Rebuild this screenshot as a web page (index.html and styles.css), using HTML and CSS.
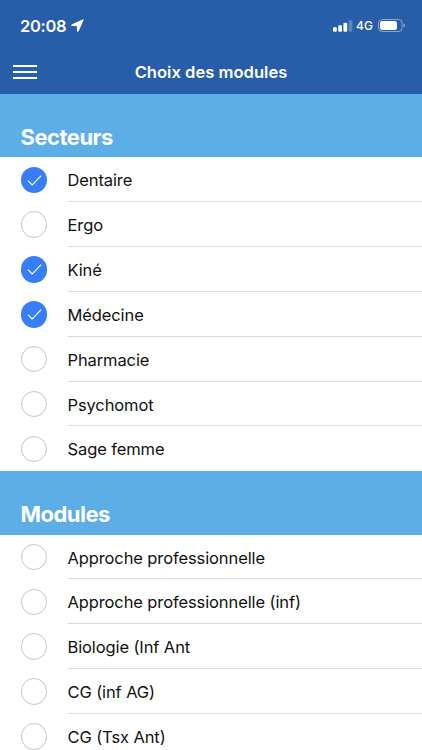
FILE: index.html
```html
<!DOCTYPE html>
<html lang="fr">
<head>
  <meta charset="UTF-8" />
  <meta name="viewport" content="width=device-width, initial-scale=1.0"/>
  <title>Choix des modules</title>
  <link rel="stylesheet" href="styles.css">
</head>
<body>
  <header>
    <div class="status-bar">
      <div class="status-left">
        <span class="time">20:08</span>
        <svg class="location" viewBox="0 0 13 13"><path d="M12.3 .7 L.7 5.9 V6.5 L6.3 6.7 L6.5 12.3 H7.1 Z" fill="#fff" stroke="#fff" stroke-width="1" stroke-linejoin="round"/></svg>
      </div>
      <div class="status-right">
        <svg class="signal" viewBox="0 0 20 12">
          <rect x="0" y="7.3" width="3.8" height="4.4" rx="1" fill="#fff"/>
          <rect x="5.2" y="5.2" width="3.8" height="6.5" rx="1" fill="#fff"/>
          <rect x="10.4" y="2.8" width="3.8" height="8.9" rx="1" fill="#fff"/>
          <rect x="15.6" y="0.3" width="3.8" height="11.4" rx="1" fill="#fff" opacity=".25"/>
        </svg>
        <span class="network">4G</span>
        <svg class="battery" viewBox="0 0 28 13">
          <rect x=".5" y=".5" width="23.6" height="12" rx="3.6" fill="none" stroke="#fff" stroke-opacity=".45"/>
          <rect x="2" y="2" width="17" height="9" rx="2.2" fill="#fff"/>
          <path d="M25.5 4.5 Q27 5 27 6.5 T25.5 8.5 Z" fill="#fff" opacity=".5"/>
        </svg>
      </div>
    </div>
    <nav>
      <button class="menu" aria-label="Menu"><span></span><span></span><span></span></button>
      <h1>Choix des modules</h1>
    </nav>
  </header>

  <main>
    <h2>Secteurs</h2>
    <ul>
      <li><span class="check checked"><svg viewBox="0 0 26 26"><path d="M6.7 13.4 L11 17.5 L19.8 8.4"/></svg></span><p>Dentaire</p></li>
      <li><span class="check"></span><p>Ergo</p></li>
      <li><span class="check checked"><svg viewBox="0 0 26 26"><path d="M6.7 13.4 L11 17.5 L19.8 8.4"/></svg></span><p>Kiné</p></li>
      <li><span class="check checked"><svg viewBox="0 0 26 26"><path d="M6.7 13.4 L11 17.5 L19.8 8.4"/></svg></span><p>Médecine</p></li>
      <li><span class="check"></span><p>Pharmacie</p></li>
      <li><span class="check"></span><p>Psychomot</p></li>
      <li><span class="check"></span><p>Sage femme</p></li>
    </ul>

    <h2>Modules</h2>
    <ul>
      <li><span class="check"></span><p>Approche professionnelle</p></li>
      <li><span class="check"></span><p>Approche professionnelle (inf)</p></li>
      <li><span class="check"></span><p>Biologie (Inf Ant</p></li>
      <li><span class="check"></span><p>CG (inf AG)</p></li>
      <li><span class="check"></span><p>CG (Tsx Ant)</p></li>
    </ul>
  </main>
</body>
</html>
```
FILE: styles.css
```css
* {
  margin: 0;
  padding: 0;
  box-sizing: border-box;
}

body {
  height: 750px;
  overflow: hidden;
  font-family: Inter, "Liberation Sans", sans-serif;
  background-color: #fff;
  color: #111;
}

header {
  height: 94px;
  background-color: #275da9;
  color: #fff;
}

.status-bar {
  display: flex;
  justify-content: space-between;
  height: 50px;
  padding: 1px 16px 0 20px;
}

.status-left,
.status-right {
  display: flex;
  align-items: center;
}

.time {
  width: 46px;
  font-size: 16.5px;
  font-weight: 600;
  letter-spacing: -0.3px;
  white-space: nowrap;
}

.location {
  width: 13px;
  height: 13px;
  margin-left: 5px;
}

.signal {
  width: 20px;
  height: 12px;
}

.network {
  width: 17px;
  margin: 0 5px 0 3px;
  font-size: 12px;
  font-weight: 500;
}

.battery {
  width: 28px;
  height: 13px;
}

nav {
  display: grid;
  grid-template-columns: 50px 1fr 50px;
  align-items: center;
  height: 44px;
}

.menu {
  display: flex;
  flex-direction: column;
  gap: 4px;
  width: 24px;
  margin-left: 13px;
  border: none;
  background: none;
  cursor: pointer;
}

.menu span {
  height: 2px;
  background-color: #fff;
}

h1 {
  font-size: 16.6px;
  font-weight: 600;
  text-align: center;
}

h2 {
  height: 63.4px;
  padding: 29px 20.5px 0;
  background-color: #5dade6;
  color: #fff;
  font-size: 22px;
  font-weight: 700;
  letter-spacing: -0.5px;
  line-height: 28px;
}

ul {
  list-style: none;
}

li {
  display: flex;
  align-items: center;
  height: 44.83px;
  padding-left: 20.5px;
}

.check {
  flex: none;
  width: 26.5px;
  height: 26.5px;
  margin-right: 20.5px;
  border: 1.5px solid #c6c6c8;
  border-radius: 50%;
}

.checked {
  border: none;
  background-color: #387ef9;
}

.check svg {
  display: block;
  width: 100%;
  height: 100%;
  fill: none;
  stroke: #fff;
  stroke-width: 1.1;
}

li p {
  flex: 1;
  height: 44.83px;
  border-bottom: 1px solid #dadadc;
  font-size: 16.5px;
  letter-spacing: -0.11px;
  line-height: 46px;
  white-space: nowrap;
}

li:last-child p {
  border-bottom: none;
}
```
